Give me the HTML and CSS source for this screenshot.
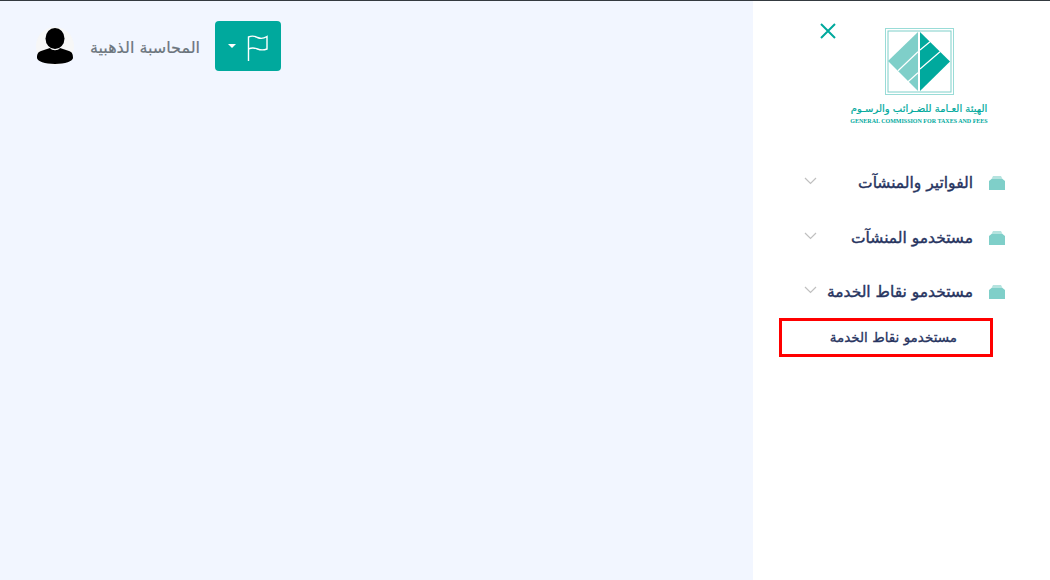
FILE: index.html
```html
<!DOCTYPE html>
<html lang="ar">
<head>
    <meta charset="UTF-8">
    <title>الهيئة العامة للضرائب والرسوم</title>
    <link rel="stylesheet" href="styles.css">
</head>
<body>
<div class="page">
    <main class="content">
        <div class="topbar">
            <div class="avatar">
                <svg width="38" height="38" viewBox="0 0 38 38">
                    <circle cx="19" cy="19" r="19" fill="#f7f7f7"/>
                    <ellipse cx="19" cy="11.5" rx="9.5" ry="10.5" fill="#000"/>
                    <path d="M14 21c2 3 8 3 10 0l9 3c3 1 4 3 4 7 0 3-8 6-18 6S1 34 1 31c0-4 1-6 4-7z" fill="#000"/>
                </svg>
            </div>
            <span class="user-name">المحاسبة الذهبية</span>
            <button class="flag-btn" type="button">
                <span class="caret"></span>
                <svg class="flag" width="21" height="26" viewBox="0 0 21 26" fill="none" stroke="#fff" stroke-width="1.4">
                    <path d="M1.500 26V2C6 0 8.500 1.500 10.500 2.500S16 4 20 1.500V14C16 15.500 13 15 10.500 14S5 12.500 1.500 14"/>
                </svg>
            </button>
        </div>
    </main>
    <aside class="sidebar">
        <a class="close-btn">
            <svg width="16" height="16" viewBox="0 0 16 16" stroke="#00a99d" stroke-width="2"><path d="M1 1l14 14M15 1L1 15"/></svg>
        </a>
        <div class="logo">
            <svg class="logo-mark" width="69" height="67" viewBox="0 0 69 67">
                <rect x="0.500" y="0.500" width="68" height="66" fill="none" stroke="#99dcd7"/>
                <rect x="3" y="3" width="63" height="61" fill="none" stroke="#7fd0ca"/>
                <path d="M33 4V63L3 33z" fill="#7fcfc9"/>
                <path d="M35 4L65 33.500 35 63z" fill="#00a99d"/>
                <path d="M33 23.700L13 42.700M33 44.700L23 53.700M35 22L45 13.700M35 41L55 23.700" stroke="#fff" stroke-width="1.200" fill="none"/>
            </svg>
            <div class="logo-ar">الهيئة العـامة للضـرائب والرسـوم</div>
            <div class="logo-en">GENERAL COMMISSION FOR TAXES AND FEES</div>
        </div>
        <ul class="menu">
            <li class="menu-item">
                <svg class="folder" width="16" height="14" viewBox="0 0 16 14"><path d="M4 0h8l1.500 3h-11z" fill="#b5e3df"/><path d="M2.500 3h11L16 5v9H0V5z" fill="#7fcfc9"/></svg>
                <span>الفواتير والمنشآت</span>
                <svg class="chev" width="13" height="8" viewBox="0 0 13 8" fill="none" stroke="#c0c0c0" stroke-width="1.200"><path d="M1 1l5.500 5.500L12 1"/></svg>
            </li>
            <li class="menu-item">
                <svg class="folder" width="16" height="14" viewBox="0 0 16 14"><path d="M4 0h8l1.500 3h-11z" fill="#b5e3df"/><path d="M2.500 3h11L16 5v9H0V5z" fill="#7fcfc9"/></svg>
                <span>مستخدمو المنشآت</span>
                <svg class="chev" width="13" height="8" viewBox="0 0 13 8" fill="none" stroke="#c0c0c0" stroke-width="1.200"><path d="M1 1l5.500 5.500L12 1"/></svg>
            </li>
            <li class="menu-item">
                <svg class="folder" width="16" height="14" viewBox="0 0 16 14"><path d="M4 0h8l1.500 3h-11z" fill="#b5e3df"/><path d="M2.500 3h11L16 5v9H0V5z" fill="#7fcfc9"/></svg>
                <span>مستخدمو نقاط الخدمة</span>
                <svg class="chev" width="13" height="8" viewBox="0 0 13 8" fill="none" stroke="#c0c0c0" stroke-width="1.200"><path d="M1 1l5.500 5.500L12 1"/></svg>
            </li>
        </ul>
        <div class="submenu-item">مستخدمو نقاط الخدمة</div>
    </aside>
</div>
</body>
</html>
```
FILE: styles.css
```css
* {
    box-sizing: border-box;
}
html, body {
    margin: 0;
    height: 100%;
}
body {
    font-family: "DejaVu Sans", "Noto Sans", sans-serif;
    background: #fff;
    overflow: hidden;
}
.page {
    display: flex;
    height: 580px;
    border-top: 1px solid #343a40;
}
.content {
    flex: none;
    width: 753px;
    background: #f2f6ff;
    padding: 20px 36px;
}
.topbar {
    display: flex;
    align-items: center;
    height: 50px;
}
.avatar {
    width: 38px;
    height: 38px;
    margin-right: 16px;
}
.user-name {
    width: 110px;
    font-size: 16px;
    color: #6c757d;
    direction: rtl;
    white-space: nowrap;
    margin-top: 2px;
    -webkit-text-stroke: 0.2px #6c757d;
}
.flag-btn {
    display: flex;
    align-items: center;
    gap: 11px;
    width: 66px;
    height: 50px;
    margin-left: 15px;
    padding: 0 0 0 13px;
    background: #00a99d;
    border: 0;
    border-radius: 4px;
}
.flag {
    margin-top: 3px;
}
.caret {
    width: 0;
    height: 0;
    border-top: 4px solid #fff;
    border-left: 4px solid transparent;
    border-right: 4px solid transparent;
}
.sidebar {
    position: relative;
    flex: none;
    width: 297px;
    direction: rtl;
    padding: 27px 45px 0 51px;
}
.close-btn {
    position: absolute;
    left: 67px;
    top: 22px;
    line-height: 0;
}
.logo {
    display: flex;
    flex-direction: column;
    align-items: center;
    color: #00a99d;
    margin-right: -29px;
}
.logo-mark {
    display: block;
    direction: ltr;
}
.logo-ar {
    font-size: 10px;
    line-height: 11px;
    margin-top: 8px;
    white-space: nowrap;
    -webkit-text-stroke: 0.2px #00a99d;
}
.logo-en {
    font-family: "Liberation Serif", serif;
    font-size: 6px;
    font-weight: bold;
    line-height: 8px;
    margin-top: 3px;
    direction: ltr;
    white-space: nowrap;
}
.menu {
    list-style: none;
    margin: 31px 0 0;
    padding: 0;
}
.menu-item {
    display: flex;
    align-items: center;
    height: 54.500px;
    font-size: 15.500px;
    color: #27345f;
    white-space: nowrap;
    -webkit-text-stroke: 0.4px #27345f;
}
.folder {
    margin-left: 16px;
    flex: none;
}
.chev {
    margin-right: auto;
    margin-bottom: 4px;
    flex: none;
}
.submenu-item {
    width: 214px;
    height: 39px;
    margin-top: -2px;
    margin-right: 12px;
    padding-right: 33px;
    border: 3px solid #f00;
    font-size: 13.500px;
    line-height: 33px;
    color: #27345f;
    white-space: nowrap;
    -webkit-text-stroke: 0.3px #27345f;
}
```
